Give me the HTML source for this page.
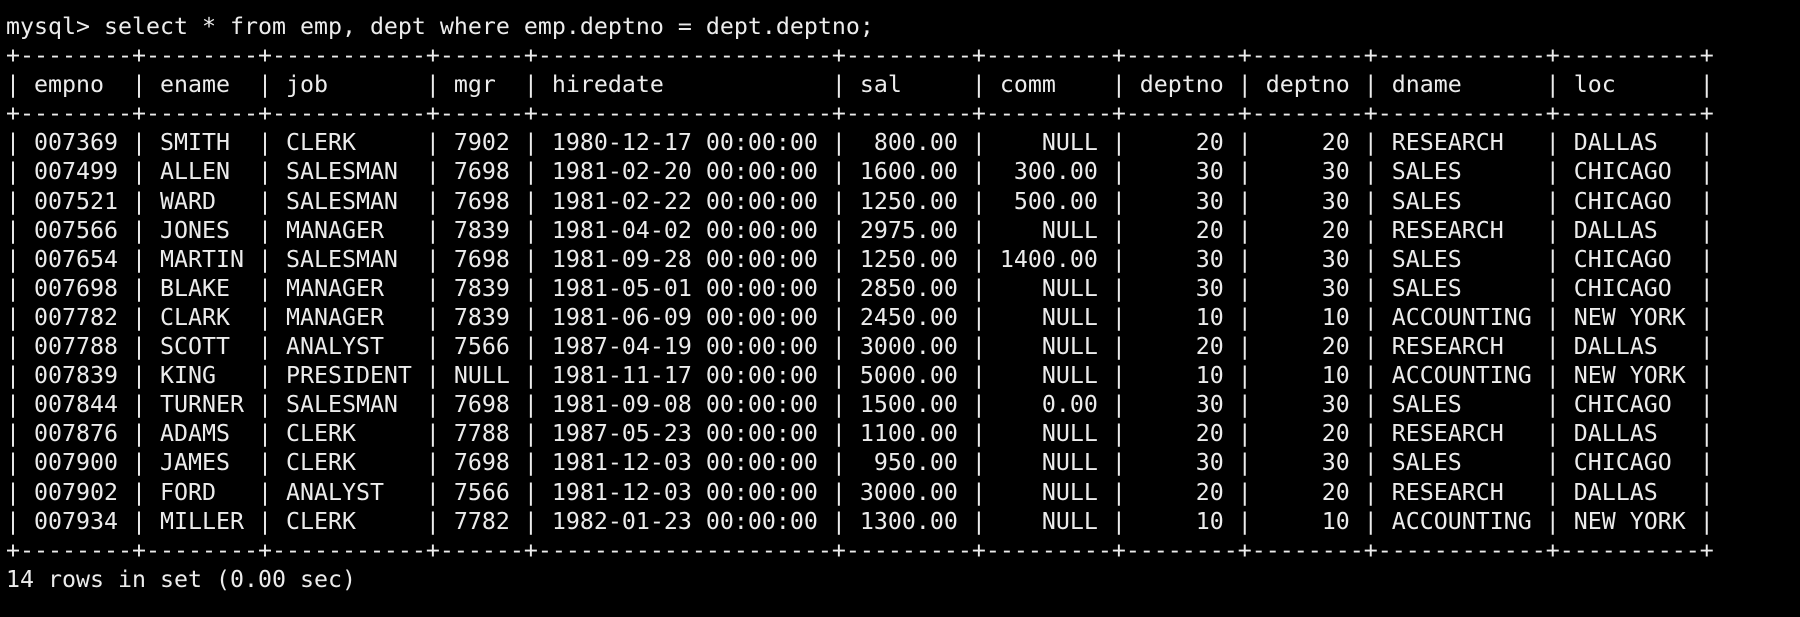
<!DOCTYPE html>
<html><head><meta charset="utf-8"><style>
html,body{margin:0;padding:0;background:#000;width:1800px;height:617px;overflow:hidden}
pre{margin:0;padding:12px 0 0 6px;font-family:"DejaVu Sans Mono","Liberation Mono",monospace;font-size:23.25px;line-height:29.1px;color:#ececec;white-space:pre}
</style></head><body><pre>mysql&gt; select * from emp, dept where emp.deptno = dept.deptno;
+--------+--------+-----------+------+---------------------+---------+---------+--------+--------+------------+----------+
| empno  | ename  | job       | mgr  | hiredate            | sal     | comm    | deptno | deptno | dname      | loc      |
+--------+--------+-----------+------+---------------------+---------+---------+--------+--------+------------+----------+
| 007369 | SMITH  | CLERK     | 7902 | 1980-12-17 00:00:00 |  800.00 |    NULL |     20 |     20 | RESEARCH   | DALLAS   |
| 007499 | ALLEN  | SALESMAN  | 7698 | 1981-02-20 00:00:00 | 1600.00 |  300.00 |     30 |     30 | SALES      | CHICAGO  |
| 007521 | WARD   | SALESMAN  | 7698 | 1981-02-22 00:00:00 | 1250.00 |  500.00 |     30 |     30 | SALES      | CHICAGO  |
| 007566 | JONES  | MANAGER   | 7839 | 1981-04-02 00:00:00 | 2975.00 |    NULL |     20 |     20 | RESEARCH   | DALLAS   |
| 007654 | MARTIN | SALESMAN  | 7698 | 1981-09-28 00:00:00 | 1250.00 | 1400.00 |     30 |     30 | SALES      | CHICAGO  |
| 007698 | BLAKE  | MANAGER   | 7839 | 1981-05-01 00:00:00 | 2850.00 |    NULL |     30 |     30 | SALES      | CHICAGO  |
| 007782 | CLARK  | MANAGER   | 7839 | 1981-06-09 00:00:00 | 2450.00 |    NULL |     10 |     10 | ACCOUNTING | NEW YORK |
| 007788 | SCOTT  | ANALYST   | 7566 | 1987-04-19 00:00:00 | 3000.00 |    NULL |     20 |     20 | RESEARCH   | DALLAS   |
| 007839 | KING   | PRESIDENT | NULL | 1981-11-17 00:00:00 | 5000.00 |    NULL |     10 |     10 | ACCOUNTING | NEW YORK |
| 007844 | TURNER | SALESMAN  | 7698 | 1981-09-08 00:00:00 | 1500.00 |    0.00 |     30 |     30 | SALES      | CHICAGO  |
| 007876 | ADAMS  | CLERK     | 7788 | 1987-05-23 00:00:00 | 1100.00 |    NULL |     20 |     20 | RESEARCH   | DALLAS   |
| 007900 | JAMES  | CLERK     | 7698 | 1981-12-03 00:00:00 |  950.00 |    NULL |     30 |     30 | SALES      | CHICAGO  |
| 007902 | FORD   | ANALYST   | 7566 | 1981-12-03 00:00:00 | 3000.00 |    NULL |     20 |     20 | RESEARCH   | DALLAS   |
| 007934 | MILLER | CLERK     | 7782 | 1982-01-23 00:00:00 | 1300.00 |    NULL |     10 |     10 | ACCOUNTING | NEW YORK |
+--------+--------+-----------+------+---------------------+---------+---------+--------+--------+------------+----------+
14 rows in set (0.00 sec)</pre></body></html>
